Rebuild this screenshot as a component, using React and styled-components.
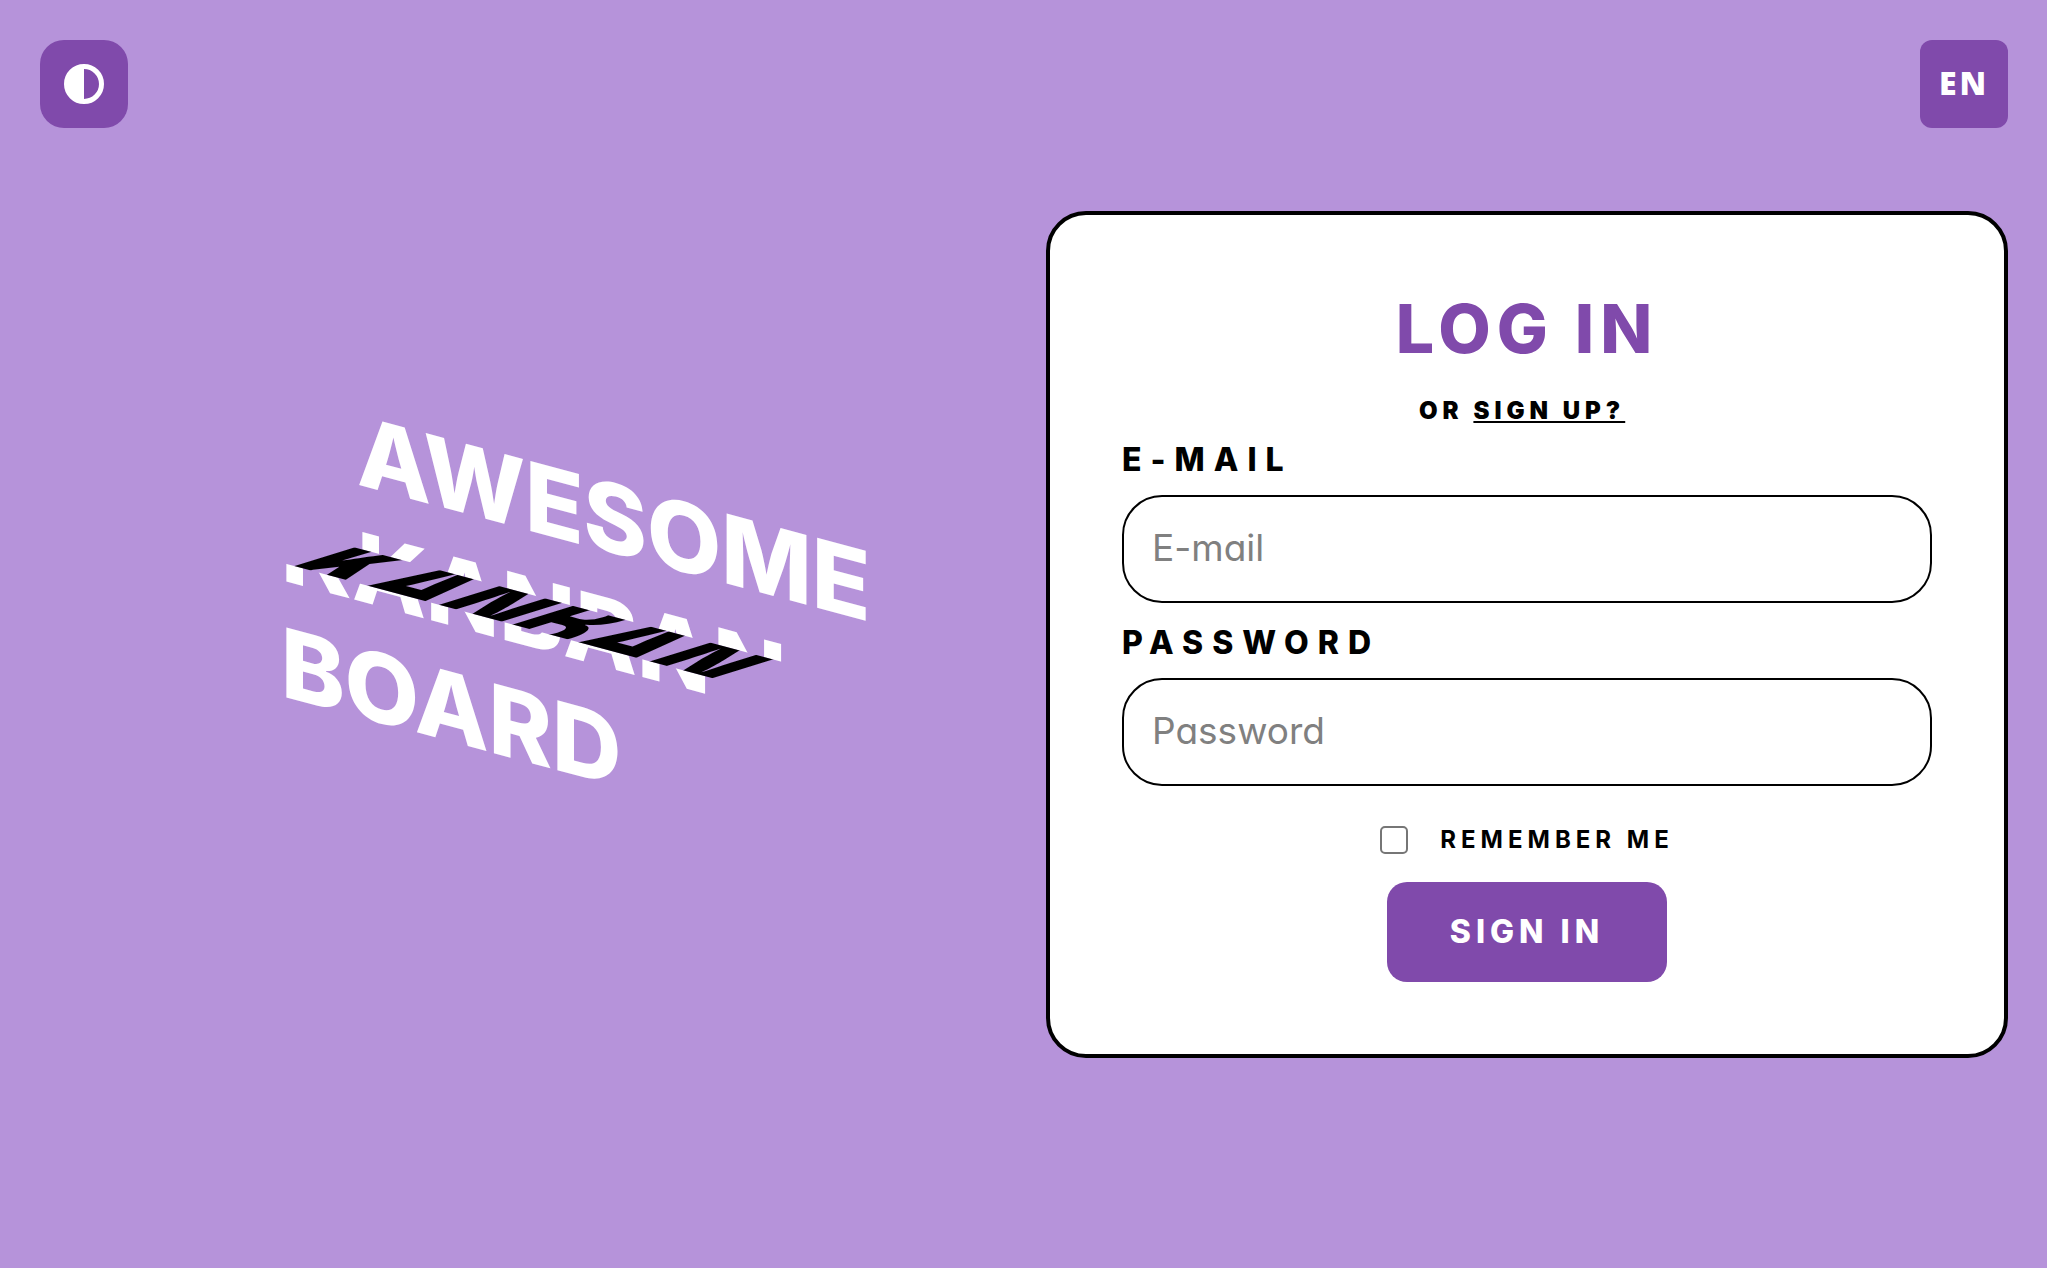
import React from 'react';
import styled, { createGlobalStyle, css } from 'styled-components';

const purple = '#804aab';
const lilac = '#b693da';

const GlobalStyle = createGlobalStyle`
  *, *::before, *::after { box-sizing: border-box; }
  body {
    margin: 0;
    background: ${lilac};
    color: #000;
    font-family: Inter, "Liberation Sans", sans-serif;
  }
`;

const Page = styled.div`
  min-height: 100vh;
  padding: 40px 39px 40px 40px;
  display: grid;
  grid-template-rows: 88px 1fr 88px;
`;

const Header = styled.header`
  display: flex;
  justify-content: space-between;
`;

const SquareButton = styled.button`
  width: 88px;
  height: 88px;
  padding: 0 0 2px;
  display: flex;
  align-items: center;
  justify-content: center;
  border: 0;
  border-radius: ${(p) => (p.$round ? '24px' : '12px')};
  background: ${purple};
  color: #fff;
  font: 800 32px/40px "Open Sans", sans-serif;
  letter-spacing: 3px;
  cursor: pointer;
`;

const ThemeButton = styled(SquareButton)`
  padding: 0;
`;

const Main = styled.main`
  display: grid;
  grid-template-columns: 1fr 1fr;
  gap: 44px;
  align-items: center;
`;

const BrandArea = styled.div`
  display: flex;
  justify-content: center;
  padding: 0 0 20px 110px;
`;

const Brand = styled.h1`
  display: grid;
  margin: 0;
  color: #fff;
  font-size: 96px;
  font-weight: 800;
  line-height: 116px;
  text-transform: uppercase;
  transform: skewY(15deg);
`;

const slices = {
  top: css`
    clip-path: inset(0 -10% 55% -10%);
    transform: translateX(38px);
  `,
  middle: css`
    clip-path: inset(45% -10% 45% -10%);
    transform: skewX(-60deg);
    color: #000;
  `,
  bottom: css`
    clip-path: inset(55% -10% 0 -10%);
    transform: translateX(-38px);
  `,
};

const Slice = styled.span`
  grid-area: 1 / 1;
  ${(p) => slices[p.$part]}
`;

const Line = styled.span`
  display: block;
`;

const Card = styled.form`
  display: flex;
  flex-direction: column;
  align-items: center;
  padding: 72px;
  border: 4px solid #000;
  border-radius: 40px;
  background: #fff;
`;

const Title = styled.h2`
  margin: 0 0 28px;
  color: ${purple};
  font-size: 68px;
  font-weight: 800;
  line-height: 82px;
  letter-spacing: 6px;
`;

const Alternative = styled.p`
  margin: 0 0 15px;
  font-size: 24px;
  font-weight: 900;
  line-height: 28px;
  letter-spacing: 5px;
`;

const SignUpLink = styled.a`
  color: inherit;
`;

const Field = styled.div`
  width: 100%;
  display: flex;
  flex-direction: column;
  gap: 16px;
  margin-bottom: ${(p) => (p.$last ? '40px' : '20px')};
`;

const Label = styled.label`
  font-size: 32px;
  font-weight: 800;
  line-height: 39px;
  letter-spacing: 9px;
`;

const TextInput = styled.input`
  width: 100%;
  height: 108px;
  padding: 0 28px 2px;
  border: 2px solid #000;
  border-radius: 40px;
  background: #fff;
  color: #000;
  font: 400 37px/44px Inter, sans-serif;
  font-feature-settings: "cv11";
  &::placeholder { color: #808080; opacity: 1; }
`;

const Remember = styled.label`
  display: flex;
  align-items: center;
  gap: 32px;
  margin-bottom: 28px;
  font-size: 24px;
  font-weight: 700;
  line-height: 28px;
  letter-spacing: 5px;
`;

const Checkbox = styled.input`
  appearance: none;
  width: 28px;
  height: 28px;
  margin: 0;
  border: 2px solid #767676;
  border-radius: 5px;
  background: #fff;
  &:checked { background: ${purple}; }
`;

const Submit = styled.button`
  width: 280px;
  height: 100px;
  padding: 0;
  border: 0;
  border-radius: 20px;
  background: ${purple};
  color: #fff;
  font: 800 32px/39px Inter, sans-serif;
  letter-spacing: 5px;
  cursor: pointer;
`;

const BrandText = () => (
  <>
    <Line>Awesome</Line>
    <Line>Kanban</Line>
    <Line>Board</Line>
  </>
);

export default function App() {
  return (
    <>
      <GlobalStyle />
      <Page>
        <Header>
          <ThemeButton type="button" $round aria-label="Toggle theme">
            <svg width="40" height="40" viewBox="0 0 40 40" aria-hidden="true">
              <circle cx="20" cy="20" r="17.5" fill="none" stroke="#fff" strokeWidth="5" />
              <path d="M20 1A19 19 0 0 0 20 39Z" fill="#fff" />
            </svg>
          </ThemeButton>
          <SquareButton type="button">EN</SquareButton>
        </Header>
        <Main>
          <BrandArea>
            <Brand>
              <Slice $part="top"><BrandText /></Slice>
              <Slice $part="bottom" aria-hidden="true"><BrandText /></Slice>
              <Slice $part="middle" aria-hidden="true"><BrandText /></Slice>
            </Brand>
          </BrandArea>
          <Card onSubmit={(e) => e.preventDefault()}>
            <Title>LOG IN</Title>
            <Alternative>
              OR <SignUpLink href="#signup">SIGN UP?</SignUpLink>{'\u00a0'}
            </Alternative>
            <Field>
              <Label htmlFor="email">E-MAIL</Label>
              <TextInput id="email" type="email" placeholder="E-mail" />
            </Field>
            <Field $last>
              <Label htmlFor="password">PASSWORD</Label>
              <TextInput id="password" type="password" placeholder="Password" />
            </Field>
            <Remember>
              <Checkbox type="checkbox" />
              REMEMBER ME
            </Remember>
            <Submit type="submit">SIGN IN</Submit>
          </Card>
        </Main>
      </Page>
    </>
  );
}
